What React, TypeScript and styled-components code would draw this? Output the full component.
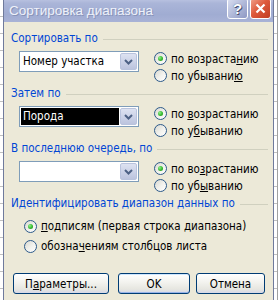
import React from 'react';
import styled, { createGlobalStyle } from 'styled-components';

const GlobalStyle = createGlobalStyle`
  html, body {
    margin: 0;
    padding: 0;
  }
  body {
    width: 278px;
    height: 300px;
    overflow: hidden;
    background: #fff;
    font-family: "DejaVu Sans Condensed", "Liberation Sans", sans-serif;
    font-size: 11.5px;
    color: #000;
  }
`;

const sortGroups = [
  {
    title: 'Сортировать по',
    value: 'Номер участка',
    selected: false,
    asc: ['по возраста', 'н', 'ию'],
    desc: ['по убывани', 'ю', ''],
  },
  {
    title: 'Затем по',
    value: 'Порода',
    selected: true,
    asc: ['по ', 'в', 'озрастанию'],
    desc: ['по у', 'б', 'ыванию'],
  },
  {
    title: 'В последнюю очередь, по',
    value: '',
    selected: false,
    asc: ['по во', 'з', 'растанию'],
    desc: ['по уб', 'ы', 'ванию'],
  },
];

const Accel: React.FC<{ parts: string[] }> = ({ parts }) => (
  <span>
    {parts[0]}
    <u>{parts[1]}</u>
    {parts[2]}
  </span>
);

const Chevron = () => (
  <svg width="9" height="6" viewBox="0 0 9 6">
    <path d="M1 1 L4.5 4.5 L8 1" fill="none" stroke="#4d6185" strokeWidth="2" />
  </svg>
);

const App: React.FC = () => {
  return (
    <>
      <GlobalStyle />
      <Page>
        <LeftStrip />
        <Dialog>
          <TitleBar>
            <TitleText>Сортировка диапазона</TitleText>
            <CaptionButtons>
              <HelpButton>?</HelpButton>
              <CloseButton>
                <svg width="11" height="11" viewBox="0 0 11 11">
                  <path d="M1.5 1.5 L9.5 9.5 M9.5 1.5 L1.5 9.5" stroke="#fff" strokeWidth="2.2" />
                </svg>
              </CloseButton>
            </CaptionButtons>
          </TitleBar>

          <Client>
            {sortGroups.map(group => (
              <SortGroup key={group.title}>
                <GroupHeader>
                  <GroupLabel>{group.title}</GroupLabel>
                  <GroupLine />
                </GroupHeader>
                <GroupRow>
                  <Combo>
                    <ComboValue $selected={group.selected}>{group.value}</ComboValue>
                    <ComboButton>
                      <Chevron />
                    </ComboButton>
                  </Combo>
                  <RadioColumn>
                    <RadioRow $height={17}>
                      <Radio $checked />
                      <Accel parts={group.asc} />
                    </RadioRow>
                    <RadioRow $height={17}>
                      <Radio />
                      <Accel parts={group.desc} />
                    </RadioRow>
                  </RadioColumn>
                </GroupRow>
              </SortGroup>
            ))}

            <GroupHeader>
              <GroupLabel>Идентифицировать диапазон данных по</GroupLabel>
              <GroupLine />
            </GroupHeader>
            <IdentifyList>
              <RadioRow $height={20}>
                <Radio $checked />
                <Accel parts={['', 'п', 'одписям (первая строка диапазона)']} />
              </RadioRow>
              <RadioRow $height={20}>
                <Radio />
                <Accel parts={['обозна', 'ч', 'ениям столбцов листа']} />
              </RadioRow>
            </IdentifyList>

            <ButtonRow>
              <PushButton $width={96} $after={9}>
                <Accel parts={['П', 'а', 'раметры...']} />
              </PushButton>
              <PushButton $width={72} $after={6} $default>
                OK
              </PushButton>
              <PushButton $width={69}>Отмена</PushButton>
            </ButtonRow>
          </Client>
        </Dialog>
        <RightStrip />
      </Page>
    </>
  );
};

const Page = styled.div`
  display: flex;
  width: 278px;
  height: 300px;
  overflow: hidden;
`;

const LeftStrip = styled.div`
  width: 3px;
  flex-shrink: 0;
  background:
    repeating-linear-gradient(to bottom, #fff 0 16px, #c0c0c0 16px 17px);
`;

const RightStrip = styled.div`
  flex: 1;
  background:
    linear-gradient(to right, transparent 0 3px, #a0a0a0 3px 4px, transparent 4px),
    repeating-linear-gradient(to bottom, #fff 0 16px, #c0c0c0 16px 17px);
`;

const Dialog = styled.div`
  width: 269px;
  flex-shrink: 0;
  margin-top: -3px;
  display: flex;
  flex-direction: column;
  background: #ece9d8;
  border-left: 1px solid #6f7a9c;
  border-right: 1px solid #6f7a9c;
`;

const TitleBar = styled.div`
  height: 25px;
  display: flex;
  align-items: flex-start;
  padding: 0 2px 0 5px;
  background: linear-gradient(
    to bottom,
    #c3cbe6 0%,
    #aab5d8 25%,
    #a0acd2 70%,
    #a8b2d6 100%
  );
`;

const TitleText = styled.div`
  margin-top: 6px;
  font-family: "Liberation Sans", sans-serif;
  font-size: 13.5px;
  line-height: 16px;
  color: #eef1fa;
  text-shadow: 1px 1px 0 #8893b8;
`;

const CaptionButtons = styled.div`
  margin-left: auto;
  margin-top: 1px;
  display: flex;
  gap: 2px;
`;

const CaptionButton = styled.div`
  width: 21px;
  height: 21px;
  box-sizing: border-box;
  border: 1px solid #fff;
  border-radius: 3px;
  display: flex;
  align-items: center;
  justify-content: center;
`;

const HelpButton = styled(CaptionButton)`
  background: linear-gradient(135deg, #d9def0 0%, #aab3d5 60%, #8e98c4 100%);
  font-family: "Liberation Sans", sans-serif;
  font-weight: bold;
  font-size: 15px;
  color: #fff;
  text-shadow: 0 0 1px #3c4468, 1px 1px 0 #4a5378;
`;

const CloseButton = styled(CaptionButton)`
  background: linear-gradient(135deg, #f0a08a 0%, #de5a3c 45%, #c03c22 100%);
`;

const Client = styled.div`
  flex: 1;
  display: flex;
  flex-direction: column;
  padding: 10px 5px 0 7px;
`;

const SortGroup = styled.div`
  height: 55px;
  display: flex;
  flex-direction: column;
`;

const GroupHeader = styled.div`
  height: 13px;
  display: flex;
  align-items: center;
  gap: 5px;
`;

const GroupLabel = styled.span`
  color: #0046d5;
  white-space: nowrap;
  line-height: 13px;
`;

const GroupLine = styled.div`
  flex: 1;
  height: 1px;
  margin-top: 1px;
  background: #d0d0bf;
`;

const GroupRow = styled.div`
  margin-top: 6px;
  display: flex;
  align-items: flex-start;
`;

const Combo = styled.div`
  margin-left: 8px;
  width: 120px;
  height: 21px;
  box-sizing: border-box;
  border: 1px solid #7f9db9;
  background: #fff;
  display: flex;
  padding: 1px;
`;

const ComboValue = styled.div<{ $selected?: boolean }>`
  flex: 1;
  padding-left: 2px;
  line-height: 17px;
  margin-right: 1px;
  background: ${({ $selected }) => ($selected ? '#000' : '#fff')};
  color: ${({ $selected }) => ($selected ? '#fff' : '#000')};
  white-space: nowrap;
  overflow: hidden;
`;

const ComboButton = styled.div`
  width: 17px;
  height: 17px;
  box-sizing: border-box;
  border: 1px solid #b9c3dd;
  border-radius: 2px;
  background: linear-gradient(to bottom, #dde2f1 0%, #c9d0e6 60%, #bcc4de 100%);
  display: flex;
  align-items: center;
  justify-content: center;
`;

const RadioColumn = styled.div`
  margin-left: 15px;
  margin-top: -1px;
  display: flex;
  flex-direction: column;
`;

const RadioRow = styled.div<{ $height: number }>`
  height: ${({ $height }) => $height}px;
  display: flex;
  align-items: center;
  gap: 4px;
  white-space: nowrap;
`;

const Radio = styled.span<{ $checked?: boolean }>`
  position: relative;
  width: 13px;
  height: 13px;
  box-sizing: border-box;
  flex-shrink: 0;
  border-radius: 50%;
  border: 1px solid #2c5a8a;
  background: linear-gradient(135deg, #d8d8d0 0%, #f2f2ee 55%, #ffffff 100%);

  &::after {
    content: '';
    display: ${({ $checked }) => ($checked ? 'block' : 'none')};
    position: absolute;
    left: 3px;
    top: 3px;
    width: 5px;
    height: 5px;
    border-radius: 50%;
    background: radial-gradient(circle at 35% 35%, #8ff08a 0%, #36b92f 55%, #1f8a1a 100%);
  }
`;

const IdentifyList = styled.div`
  margin-top: 6px;
  margin-left: 13px;
  display: flex;
  flex-direction: column;
`;

const ButtonRow = styled.div`
  margin-top: 17px;
  margin-left: 2px;
  display: flex;
`;

const PushButton = styled.div<{ $width: number; $after?: number; $default?: boolean }>`
  width: ${({ $width }) => $width}px;
  margin-right: ${({ $after }) => $after ?? 0}px;
  height: 21px;
  box-sizing: border-box;
  border: 1px solid #003c74;
  border-radius: 3px;
  background: linear-gradient(to bottom, #ffffff 0%, #f4f4f0 40%, #e6e6e0 80%, #d6d8e8 100%);
  box-shadow: ${({ $default }) =>
    $default ? 'inset 0 -1px 0 #99b4e8, inset 0 1px 0 #cee7ff' : 'none'};
  display: flex;
  align-items: center;
  justify-content: center;
  white-space: nowrap;
`;

export default App;
